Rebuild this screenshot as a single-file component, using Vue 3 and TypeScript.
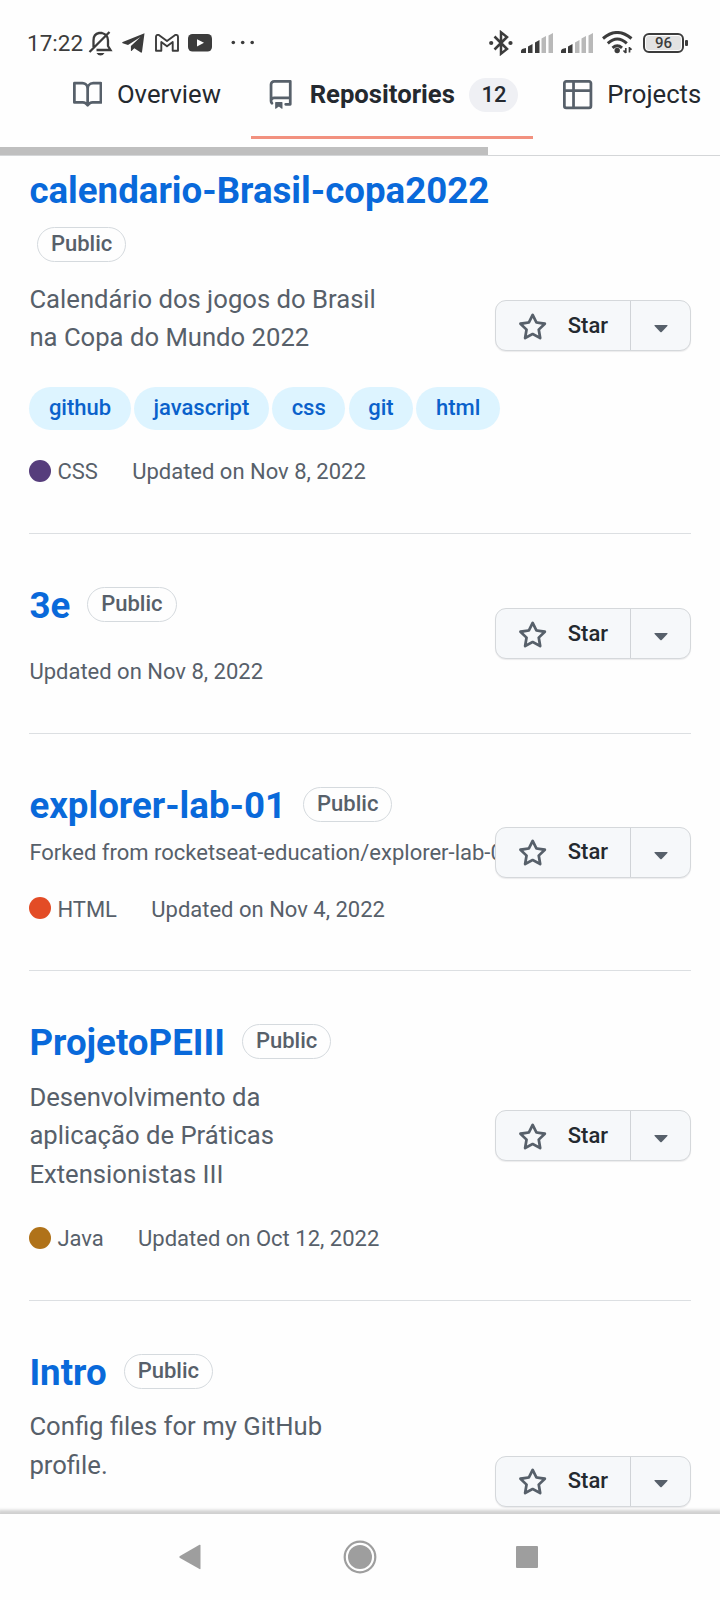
<script setup lang="ts">
interface Repo {
  name: string
  forkedFrom?: string
  description?: string
  topics?: string[]
  language?: { name: string; color: string }
  updated?: string
}

const repos: Repo[] = [
  {
    name: 'calendario-Brasil-copa2022',
    description: 'Calendário dos jogos do Brasil\nna Copa do Mundo 2022',
    topics: ['github', 'javascript', 'css', 'git', 'html'],
    language: { name: 'CSS', color: '#563d7c' },
    updated: 'Nov 8, 2022',
  },
  { name: '3e', updated: 'Nov 8, 2022' },
  {
    name: 'explorer-lab-01',
    forkedFrom: 'rocketseat-education/explorer-lab-01',
    language: { name: 'HTML', color: '#e34c26' },
    updated: 'Nov 4, 2022',
  },
  {
    name: 'ProjetoPEIII',
    description: 'Desenvolvimento da\naplicação de Práticas\nExtensionistas III',
    language: { name: 'Java', color: '#b07219' },
    updated: 'Oct 12, 2022',
  },
  { name: 'Intro', description: 'Config files for my GitHub\nprofile.' },
]

const tabs = [
  {
    label: 'Overview',
    icon: 'M0 1.75A.75.75 0 0 1 .75 1h4.253c1.227 0 2.317.59 3 1.501A3.743 3.743 0 0 1 11.006 1h4.245a.75.75 0 0 1 .75.75v10.5a.75.75 0 0 1-.75.75h-4.507a2.25 2.25 0 0 0-1.591.659l-.622.621a.75.75 0 0 1-1.06 0l-.622-.621A2.25 2.25 0 0 0 5.258 13H.75a.75.75 0 0 1-.75-.75Zm7.251 10.324.004-5.073-.002-2.253A2.25 2.25 0 0 0 5.003 2.5H1.5v9h3.757a3.75 3.75 0 0 1 1.994.574ZM8.755 4.75l-.004 7.322a3.752 3.752 0 0 1 1.992-.572H14.5v-9h-3.495a2.25 2.25 0 0 0-2.25 2.25Z',
  },
  {
    label: 'Repositories',
    count: 12,
    active: true,
    icon: 'M2 2.5A2.5 2.5 0 0 1 4.5 0h8.75a.75.75 0 0 1 .75.75v12.5a.75.75 0 0 1-.75.75h-2.5a.75.75 0 0 1 0-1.5h1.75v-2h-8a1 1 0 0 0-.714 1.7.75.75 0 1 1-1.072 1.05A2.495 2.495 0 0 1 2 11.5Zm10.5-1h-8a1 1 0 0 0-1 1v6.708A2.486 2.486 0 0 1 4.5 9h8ZM5 12.25a.25.25 0 0 1 .25-.25h3.5a.25.25 0 0 1 .25.25v3.25a.25.25 0 0 1-.4.2l-1.45-1.087a.249.249 0 0 0-.3 0L5.4 15.7a.25.25 0 0 1-.4-.2Z',
  },
  {
    label: 'Projects',
    icon: 'M0 1.75C0 .784.784 0 1.75 0h12.5C15.216 0 16 .784 16 1.75v12.5A1.75 1.75 0 0 1 14.25 16H1.75A1.75 1.75 0 0 1 0 14.25ZM6.5 6.5v8h7.75a.25.25 0 0 0 .25-.25V6.5Zm8-1.5V1.75a.25.25 0 0 0-.25-.25H6.5V5Zm-13 1.5v7.75c0 .138.112.25.25.25H5v-8ZM5 5V1.5H1.75a.25.25 0 0 0-.25.25V5Z',
  },
]

// Number of lit bars for each SIM
const signals = [3, 2]
const bars = ['M0 20v-2q0-2.500 5-3v5z', 'M7 20v-6.500l4.500-2.500v9z', 'M14 20V9.500l4.500-2.500v13z', 'M20.500 20V5.500L25 3v17z', 'M27.500 20V2.500L32 0v20z']
</script>

<template>
  <div class="screen">
    <div class="status">
      <span class="clock">17:22</span>
      <svg class="bell" width="26" height="26" viewBox="0 0 26 26" fill="none" stroke="#3c3c3c" stroke-width="2.300">
        <path d="M5.500 17V10.500C5.500 5.500 8 3.500 11 3h3C18 4 20 6.500 20 10.500V16l2.500 4H8.500M1.500 22 21.500 2" />
        <path d="M8.500 23h8q-1.500 2.500-4 2.500T8.500 23z" fill="#3c3c3c" stroke="none" />
      </svg>
      <svg class="plane" width="23" height="20" viewBox="0 0 23 20" fill="#3c3c3c">
        <path d="M22.500.2 20 19q-.3 1-1.200.5l-6.500-4.200-2.800 2.600q-.6.300-.6-.500V13L18.500 4 6 12 .7 10.300q-1-.600 0-1.200z" />
      </svg>
      <svg class="mail" width="24" height="18" viewBox="0 0 24 18" fill="none" stroke="#3c3c3c" stroke-width="1.900" stroke-linejoin="round">
        <path d="M1 16.700V2.800q0-1.900 2-1.900h.800L12 7l8.200-6.100H21q2 0 2 1.900v13.900h-5.300V8L12 12.200 6.300 8v8.700z" />
      </svg>
      <svg class="video" width="24" height="18" viewBox="0 0 24 18">
        <rect width="24" height="17.500" rx="4.500" fill="#3c3c3c" />
        <path d="m9 5.200 7 3.600-7 3.600z" fill="#fff" />
      </svg>
      <svg class="more" width="24" height="5" viewBox="0 0 24 5" fill="#3c3c3c">
        <circle cx="2.300" cy="2.500" r="1.800" /><circle cx="11.700" cy="2.500" r="1.800" /><circle cx="21.200" cy="2.500" r="1.800" />
      </svg>
      <div class="spacer"></div>
      <svg class="bt" width="24" height="26" viewBox="0 0 24 26" fill="none" stroke="#3c3c3c" stroke-width="2.500">
        <path d="m5.500 6.500 12.500 12.500L12 23.700V2.300L18 7 5.500 19.500" />
        <circle cx="2.200" cy="13" r="2.100" fill="#3c3c3c" stroke="none" /><circle cx="21.500" cy="13" r="2.100" fill="#3c3c3c" stroke="none" />
      </svg>
      <svg v-for="(lit, i) in signals" :key="i" class="signal" width="32" height="20" viewBox="0 0 32 20">
        <path v-for="(bar, n) in bars" :key="n" :d="bar" :fill="n < lit ? '#3c3c3c' : '#b9b9b9'" />
      </svg>
      <svg class="wifi" width="32" height="23" viewBox="0 0 32 23" fill="none" stroke="#3c3c3c" stroke-width="3">
        <path d="M1 7.500q14-12 28.500 0M5.800 12.300q9.500-8.500 19 0M10.500 16.800q4.800-4 9.500 0" />
        <circle cx="15.200" cy="19.500" r="2.700" fill="#3c3c3c" stroke="none" />
        <path d="M23.800 22v-5m-2.300 2.500 2.300 2.300M27.500 16v5.500m0-5 2 2.200" stroke-width="1.700" />
      </svg>
      <div class="battery"><span>96</span></div>
    </div>

    <nav class="tabs">
      <a v-for="tab in tabs" :key="tab.label" class="tab" :class="{ active: tab.active }">
        <svg width="29.300" height="29.300" viewBox="0 0 16 16" fill="#57606a"><path :d="tab.icon" /></svg>
        <span class="label">{{ tab.label }}</span>
        <span v-if="tab.count" class="count">{{ tab.count }}</span>
      </a>
    </nav>
    <div class="scrollbar"><div class="thumb"></div></div>

    <main class="list">
      <article v-for="repo in repos" :key="repo.name" class="repo">
        <div class="info">
          <h3><a>{{ repo.name }}</a><span class="public">Public</span></h3>
          <p v-if="repo.forkedFrom" class="fork">Forked from {{ repo.forkedFrom }}</p>
          <p v-if="repo.description" class="desc">{{ repo.description }}</p>
          <div v-if="repo.topics" class="topics">
            <a v-for="topic in repo.topics" :key="topic">{{ topic }}</a>
          </div>
          <div v-if="repo.updated" class="meta">
            <span v-if="repo.language" class="lang">
              <i :style="{ backgroundColor: repo.language.color }"></i>{{ repo.language.name }}
            </span>
            <span>Updated on {{ repo.updated }}</span>
          </div>
        </div>
        <div class="star">
          <button class="star-main">
            <svg width="29.300" height="29.300" viewBox="0 0 16 16" fill="#57606a">
              <path d="M8 .25a.75.75 0 0 1 .673.418l1.882 3.815 4.210.612a.75.75 0 0 1 .416 1.279l-3.046 2.970.719 4.192a.751.751 0 0 1-1.088.791L8 12.347l-3.766 1.980a.75.75 0 0 1-1.088-.790l.720-4.194L.818 6.374a.75.75 0 0 1 .416-1.280l4.210-.611L7.327.668A.75.75 0 0 1 8 .25Zm0 2.445L6.615 5.500a.75.75 0 0 1-.564.410l-3.097.450 2.240 2.184a.75.75 0 0 1 .216.664l-.528 3.084 2.769-1.456a.75.75 0 0 1 .698 0l2.770 1.456-.530-3.084a.75.75 0 0 1 .216-.664l2.240-2.183-3.096-.450a.75.75 0 0 1-.564-.410L8 2.694Z" />
            </svg>
            <span>Star</span>
          </button>
          <button class="star-menu" aria-label="Lists">
            <svg width="14" height="8" viewBox="0 0 14 8" fill="#57606a"><path d="M1 0h12q1 .2.400 1L7.700 6.900q-.7.600-1.400 0L.600 1Q0 .2 1 0z" /></svg>
          </button>
        </div>
      </article>
    </main>

    <footer class="navbar">
      <svg class="back" width="22" height="26" viewBox="0 0 22 26" fill="#9e9e9e"><path d="M20.500.8q1-.3 1 .7v23q0 1-1 .6L1 14q-1.300-1 0-2z" /></svg>
      <svg class="home" width="34" height="34" viewBox="0 0 34 34">
        <circle cx="17" cy="17" r="15.300" fill="none" stroke="#9e9e9e" stroke-width="2.200" />
        <circle cx="17" cy="17" r="12" fill="#9e9e9e" />
      </svg>
      <div class="recent"></div>
    </footer>
  </div>
</template>

<style>
body {
  margin: 0;
  background: #fefefe;
}
</style>

<style scoped>
* {
  box-sizing: border-box;
}
.screen {
  width: 720px;
  height: 1600px;
  display: flex;
  flex-direction: column;
  overflow: hidden;
  background: #fefefe;
  color: #24292f;
  font-family: Roboto, "Liberation Sans", sans-serif;
}
.status {
  flex: none;
  height: 60px;
  padding: 25px 32px 0 27px;
  display: flex;
  align-items: center;
}
.status svg {
  flex: none;
}
.clock {
  width: 61px;
  color: #3c3c3c;
  font-size: 22.500px;
  line-height: 26px;
}
.plane {
  margin-left: 8px;
}
.mail,
.video {
  margin-left: 9.500px;
}
.more {
  margin-left: 19px;
}
.spacer {
  flex: 1;
}
.signal {
  margin-left: 8px;
}
.wifi {
  margin-left: 9px;
}
.battery {
  position: relative;
  width: 41px;
  height: 20px;
  margin: 0 4px 0 9px;
  padding: 1px;
  border: 2px solid #3c3c3c;
  border-radius: 6px;
}
.battery::after {
  content: "";
  position: absolute;
  right: -6px;
  top: 5px;
  width: 3px;
  height: 6px;
  border-radius: 1px;
  background: #3c3c3c;
}
.battery span {
  display: block;
  height: 14px;
  border-radius: 3px;
  background: #e2e2e2;
  color: #3c3c3c;
  font-size: 15px;
  font-weight: 500;
  line-height: 15px;
  text-align: center;
}
.tabs {
  flex: none;
  height: 87px;
  padding-left: 58.700px;
  display: flex;
  align-items: flex-start;
  gap: 16px;
  white-space: nowrap;
}
.tab {
  flex: none;
  height: 79px;
  padding: 0 14.400px 6px;
  border-bottom: 3px solid transparent;
  display: flex;
  align-items: center;
  gap: 14.600px;
  font-size: 25.660px;
  line-height: 38px;
}
.tab .label {
  margin-top: -1.500px;
}
.tab.active {
  border-color: #f2917f;
}
.active .label {
  font-weight: 700;
}
.count {
  height: 34px;
  width: 49px;
  border-radius: 17px;
  background: #eff0f4;
  text-align: center;
  font-size: 22px;
  font-weight: 500;
  line-height: 34px;
}
.scrollbar {
  flex: none;
  height: 9px;
  border-bottom: 1px solid #d4d6d8;
}
.thumb {
  width: 488px;
  height: 8px;
  background: #bfbfbf;
}
.list {
  flex: 1;
  min-height: 0;
  overflow: hidden;
  padding: 0 29px;
}
.repo {
  display: flex;
  align-items: center;
  padding: 44px 0 45px;
  border-bottom: 1px solid #dcdfe2;
  color: #57606a;
}
.repo:first-child {
  padding-top: 6.500px;
}
.repo:nth-child(3) {
  padding-bottom: 44.500px;
}
.repo:last-child {
  height: 361px;
  border: 0;
}
.repo:last-child .info {
  align-self: flex-start;
}
.info {
  flex: 1;
  min-width: 0;
  padding-left: 0.400px;
  font-size: 22px;
  line-height: 33px;
}
h3 {
  margin: 0;
  display: flex;
  flex-wrap: wrap;
  align-items: center;
  column-gap: 9.500px;
  font-size: 36.660px;
  line-height: 55px;
  font-weight: 700;
  color: #0969da;
}
.public {
  height: 35px;
  margin: 9px 0 11px 7.500px;
  padding: 0 13px;
  border: 1.500px solid #d5dade;
  border-radius: 18px;
  color: #57606a;
  font-size: 22px;
  font-weight: 500;
  line-height: 32px;
}
p {
  margin: 0;
}
.fork {
  margin-top: 3px;
  white-space: nowrap;
}
.desc {
  margin-top: 7.300px;
  font-size: 25.660px;
  line-height: 38.500px;
  white-space: pre-line;
}
.topics {
  display: flex;
  gap: 3.400px;
  margin-top: 30.500px;
}
.topics a {
  height: 42.500px;
  padding: 0 19.500px;
  border-radius: 22px;
  background: #ddf4ff;
  color: #0a61cb;
  font-weight: 500;
  line-height: 42px;
}
.meta {
  display: flex;
}
h3 + .meta {
  margin-top: 21.700px;
}
.fork + .meta {
  margin-top: 23.700px;
}
.desc + .meta {
  margin-top: 29px;
}
.topics + .meta {
  margin-top: 25.700px;
}
.lang {
  display: flex;
  align-items: center;
  margin-right: 34.300px;
}
.lang i {
  width: 22px;
  height: 22px;
  margin: -2px 6px 0 0;
  border-radius: 50%;
}
.star {
  position: relative;
  flex: none;
  display: flex;
  width: 196px;
  height: 51px;
  margin-top: 1px;
  border: 1.500px solid #d5d8db;
  border-radius: 11px;
  background: #f6f8fa;
  box-shadow: 0 1px 1px rgba(27, 31, 36, 0.080);
}
.repo:last-child .star {
  margin-top: 0;
}
.star button {
  margin: 0;
  padding: 0;
  border: 0;
  background: none;
  color: #24292f;
  font: 500 22px/33px Roboto, "Liberation Sans", sans-serif;
  display: flex;
  align-items: center;
}
.star .star-main {
  width: 135px;
  padding-left: 22px;
  gap: 20.500px;
  border-right: 1px solid #d0d3d7;
}
.star-main svg {
  margin-top: 3px;
}
.star-main span {
  margin-top: -1.500px;
}
.star .star-menu {
  flex: 1;
  justify-content: center;
}
.star-menu svg {
  margin-top: 6px;
}
.navbar {
  position: relative;
  flex: none;
  height: 87px;
  padding: 0 0 1px 178.700px;
  display: flex;
  align-items: center;
  background: #fefefe;
  border-top: 1px solid #d0d0d0;
  box-shadow: 0 -1px 3px 2px rgba(0, 0, 0, 0.180);
}
.home {
  margin-left: 142.500px;
}
.recent {
  width: 22px;
  height: 22px;
  margin-left: 139px;
  border-radius: 1px;
  background: #9e9e9e;
}
</style>
